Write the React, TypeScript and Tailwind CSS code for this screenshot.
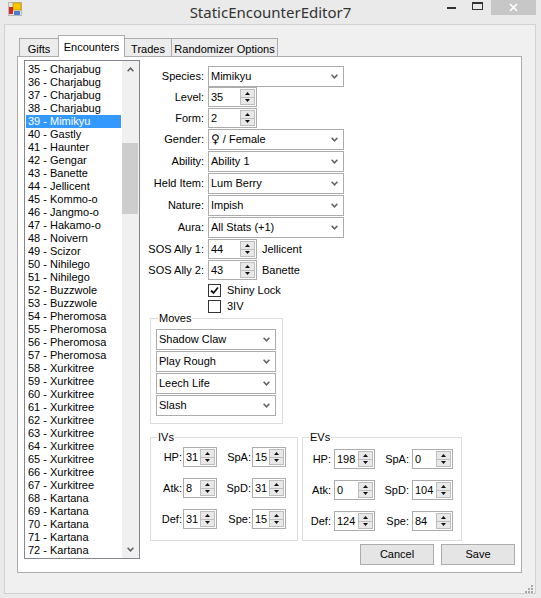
import React from 'react';

/** Encounter list entries shown in the listbox (scrolled to 35). */
const ENTRIES: string[] = [
    ...['Charjabug', 'Charjabug', 'Charjabug', 'Charjabug', 'Mimikyu', 'Gastly', 'Haunter', 'Gengar', 'Banette', 'Jellicent'],
    ...['Kommo-o', 'Jangmo-o', 'Hakamo-o', 'Noivern', 'Scizor', 'Nihilego', 'Nihilego', 'Buzzwole', 'Buzzwole'],
    ...['Pheromosa', 'Pheromosa', 'Pheromosa', 'Pheromosa'],
    ...Array(10).fill('Xurkitree'),
    ...Array(5).fill('Kartana'),
].map((name, i) => `${35 + i} - ${name}`);

const SELECTED = 4;

function ChevronDown() {
    return (
        <svg width="7" height="5" viewBox="0 0 7 5">
            <path d="M0.6 0.8 L3.5 3.8 L6.4 0.8" fill="none" stroke="#606060" strokeWidth="1.5" />
        </svg>
    );
}

function ChevronUp() {
    return (
        <svg width="7" height="5" viewBox="0 0 7 5">
            <path d="M0.6 4.2 L3.5 1.2 L6.4 4.2" fill="none" stroke="#606060" strokeWidth="1.5" />
        </svg>
    );
}

function Combo({ value, width }: { value: React.ReactNode; width: string }) {
    return (
        <div className={`flex h-[21px] items-center justify-between border border-[#acacac] bg-white pl-[2px] pr-[5px] ${width}`}>
            <span>{value}</span>
            <ChevronDown />
        </div>
    );
}

/** Up/down spin buttons of a NumericUpDown. */
function Spin() {
    return (
        <div className="mr-px flex h-full w-[15px] flex-col py-px">
            <div className="flex flex-1 items-center justify-center border border-[#bdbdbd] bg-[#e8e8e8]">
                <svg width="5" height="3" viewBox="0 0 5 3">
                    <path d="M2.5 0 L5 3 L0 3Z" fill="#111" />
                </svg>
            </div>
            <div className="flex flex-1 items-center justify-center border border-t-0 border-[#bdbdbd] bg-[#e8e8e8]">
                <svg width="5" height="3" viewBox="0 0 5 3">
                    <path d="M0 0 L5 0 L2.5 3Z" fill="#111" />
                </svg>
            </div>
        </div>
    );
}

function Numeric({ value, width }: { value: string; width: string }) {
    return (
        <div className={`flex h-[20px] items-center border border-[#acacac] bg-white ${width}`}>
            <span className="flex-1 pl-[2px]">{value}</span>
            <Spin />
        </div>
    );
}

function Row({ label, className, children }: { label: string; className?: string; children: React.ReactNode }) {
    return (
        <div className={`flex items-center ${className ?? ''}`}>
            <span className="w-[65px] pr-px text-right">{label}</span>
            <div className="ml-[3px] flex items-center">{children}</div>
        </div>
    );
}

function CheckBox({ label, checked }: { label: string; checked?: boolean }) {
    return (
        <div className="ml-[68px] flex h-[13px] items-center">
            <div className="flex h-[13px] w-[13px] items-center justify-center border border-[#333] bg-white">
                {checked && (
                    <svg width="9" height="9" viewBox="0 0 9 9">
                        <path d="M1 4.5 L3.5 7 L8 1.5" fill="none" stroke="#111" strokeWidth="1.8" />
                    </svg>
                )}
            </div>
            <span className="ml-[6px]">{label}</span>
        </div>
    );
}

function StatRow({ l1, v1, l2, v2, ev }: { l1: string; v1: string; l2: string; v2: string; ev?: boolean }) {
    return (
        <div className="flex items-center">
            <span className={`text-right ${ev ? 'w-[31px] pr-[3px]' : 'w-[32px] pr-px'}`}>{l1}</span>
            <Numeric value={v1} width={ev ? 'w-[41px]' : 'w-[34px]'} />
            <span className={`text-right ${ev ? 'w-[37px] pr-[3px]' : 'w-[35px] pr-px'}`}>{l2}</span>
            <Numeric value={v2} width={ev ? 'w-[41px]' : 'w-[34px]'} />
        </div>
    );
}

function App() {
    return (
        <div className="h-[598px] w-[541px] overflow-hidden bg-[#eaeaea] font-['Liberation_Sans',Arial,sans-serif] text-[11px] leading-[13px] text-black">
            {/* Title bar */}
            <div className="grid h-[24px] grid-cols-[1fr_auto_1fr]">
                <div className="pl-[8px] pt-[2px]">
                    <svg width="14" height="14" viewBox="0 0 14 14">
                        <rect x="0.5" y="0.5" width="13" height="13" fill="#e4e4e4" stroke="#b8b8b8" />
                        <rect x="5" y="1" width="8" height="7" fill="#f7c600" stroke="#c99a00" strokeWidth="0.8" />
                        <rect x="1" y="5" width="4" height="7" fill="#d22a2a" />
                        <rect x="6" y="9" width="6" height="4" fill="#4a7fd6" />
                    </svg>
                </div>
                <div className="flex items-center font-['Noto_Sans','Open_Sans',sans-serif] text-[15px] text-[#333]">
                    StaticEncounterEditor7
                </div>
                <div className="flex items-start justify-end pr-[5px]">
                    <div className="flex h-[15px] w-[26px] justify-center pt-[7px]">
                        <div className="h-[2px] w-[9px] bg-[#333]" />
                    </div>
                    <div className="flex h-[15px] w-[27px] justify-center pt-[2px]">
                        <div className="h-[8px] w-[11px] border border-t-2 border-[#333]" />
                    </div>
                    <div className="flex h-[15px] w-[45px] items-center justify-center bg-[#c7c7c7]">
                        <svg width="9" height="9" viewBox="0 0 9 9">
                            <path d="M1 1 L8 8 M8 1 L1 8" stroke="#fff" strokeWidth="1.6" />
                        </svg>
                    </div>
                </div>
            </div>

            {/* Client area */}
            <div className="ml-[4px] flex h-[570px] w-[532px] flex-col border border-[#d2d2d2] bg-[#f0f0f0] pl-[12px] pt-[10px]">
                {/* Tabs */}
                <div className="ml-[2px] flex h-[21px] items-end">
                    <div className="flex h-[18px] w-[39px] justify-center border-l border-t border-[#acacac] bg-[#ececec] pt-[4px]">Gifts</div>
                    <div className="relative z-10 -mb-px flex h-[22px] w-[67px] justify-center border-x border-t border-[#acacac] bg-white pt-[5px]">
                        Encounters
                    </div>
                    <div className="flex h-[18px] w-[47px] justify-center border-r border-t border-[#acacac] bg-[#ececec] pt-[4px]">Trades</div>
                    <div className="flex h-[18px] w-[106px] justify-center border-r border-t border-[#acacac] bg-[#ececec] pt-[4px]">
                        Randomizer Options
                    </div>
                </div>

                {/* Tab page */}
                <div className="flex h-[517px] w-[505px] border border-[#acacac] bg-white">
                    {/* Encounter list */}
                    <div className="ml-[6px] mt-[3px] flex h-[499px] w-[116px] border border-[#828790] bg-white">
                        <div className="flex-1 overflow-hidden pt-[2px]">
                            {ENTRIES.map((e, i) => (
                                <div
                                    key={e}
                                    className={`mx-px h-[13px] whitespace-nowrap px-[2px] ${i === SELECTED ? 'bg-[#3399ff] text-white' : ''}`}
                                >
                                    {e}
                                </div>
                            ))}
                        </div>
                        <div className="flex w-[17px] flex-col bg-[#f0f0f0]">
                            <div className="flex h-[17px] items-center justify-center">
                                <ChevronUp />
                            </div>
                            <div className="flex-1">
                                <div className="ml-0 mr-px mt-[65px] h-[71px] bg-[#cdcdcd]" />
                            </div>
                            <div className="flex h-[17px] items-center justify-center">
                                <ChevronDown />
                            </div>
                        </div>
                    </div>

                    {/* Encounter details */}
                    <div className="mt-[9px] flex flex-1 flex-col">
                        <Row label="Species:" className="h-[21px]">
                            <Combo value="Mimikyu" width="w-[136px]" />
                        </Row>
                        <Row label="Level:" className="h-[20px]">
                            <Numeric value="35" width="w-[49px]" />
                        </Row>
                        <Row label="Form:" className="mt-px h-[20px]">
                            <Numeric value="2" width="w-[49px]" />
                        </Row>
                        <Row label="Gender:" className="mt-px h-[21px]">
                            <Combo
                                value={
                                    <>
                                        <span className="font-['DejaVu_Sans',sans-serif] text-[12px]">♀</span> / Female
                                    </>
                                }
                                width="w-[136px]"
                            />
                        </Row>
                        <Row label="Ability:" className="mt-px h-[21px]">
                            <Combo value="Ability 1" width="w-[136px]" />
                        </Row>
                        <Row label="Held Item:" className="mt-px h-[21px]">
                            <Combo value="Lum Berry" width="w-[136px]" />
                        </Row>
                        <Row label="Nature:" className="mt-px h-[21px]">
                            <Combo value="Impish" width="w-[136px]" />
                        </Row>
                        <Row label="Aura:" className="mt-px h-[21px]">
                            <Combo value="All Stats (+1)" width="w-[136px]" />
                        </Row>
                        <Row label="SOS Ally 1:" className="mt-px h-[20px]">
                            <Numeric value="44" width="w-[49px]" />
                            <span className="ml-[5px]">Jellicent</span>
                        </Row>
                        <Row label="SOS Ally 2:" className="mt-px h-[20px]">
                            <Numeric value="43" width="w-[49px]" />
                            <span className="ml-[5px]">Banette</span>
                        </Row>
                        <div className="mt-[4px]">
                            <CheckBox label="Shiny Lock" checked />
                        </div>
                        <div className="mt-[3px]">
                            <CheckBox label="3IV" />
                        </div>

                        {/* Moves */}
                        <fieldset className="ml-[10px] h-[111px] w-[133px] border border-[#dcdcdc] px-[5px]">
                            <legend className="ml-[2px] px-px leading-[10px]">Moves</legend>
                            <div className="flex flex-col gap-px pt-[6px]">
                                <Combo value="Shadow Claw" width="w-[120px]" />
                                <Combo value="Play Rough" width="w-[120px]" />
                                <Combo value="Leech Life" width="w-[120px]" />
                                <Combo value="Slash" width="w-[120px]" />
                            </div>
                        </fieldset>

                        {/* IVs / EVs */}
                        <div className="ml-[10px] mt-[8px] flex gap-[4px]">
                            <fieldset className="h-[109px] w-[148px] border border-[#dcdcdc]">
                                <legend className="ml-[6px] px-px leading-[10px]">IVs</legend>
                                <div className="flex flex-col gap-[11px] pt-[5px]">
                                    <StatRow l1="HP:" v1="31" l2="SpA:" v2="15" />
                                    <StatRow l1="Atk:" v1="8" l2="SpD:" v2="31" />
                                    <StatRow l1="Def:" v1="31" l2="Spe:" v2="15" />
                                </div>
                            </fieldset>
                            <fieldset className="h-[109px] w-[160px] border border-[#dcdcdc]">
                                <legend className="ml-[6px] px-px leading-[10px]">EVs</legend>
                                <div className="flex flex-col gap-[11px] pt-[7px]">
                                    <StatRow ev l1="HP:" v1="198" l2="SpA:" v2="0" />
                                    <StatRow ev l1="Atk:" v1="0" l2="SpD:" v2="104" />
                                    <StatRow ev l1="Def:" v1="124" l2="Spe:" v2="84" />
                                </div>
                            </fieldset>
                        </div>

                        {/* Actions */}
                        <div className="mt-[3px] flex justify-end gap-[7px] pr-[6px]">
                            <button className="h-[21px] w-[74px] border border-[#acacac] bg-[#e5e5e5]">Cancel</button>
                            <button className="h-[21px] w-[74px] border border-[#acacac] bg-[#e5e5e5]">Save</button>
                        </div>
                    </div>
                </div>

                {/* Size grip */}
                <div className="mt-[12px] flex justify-end pr-[2px]">
                    <svg width="8" height="8" viewBox="0 0 8 8" fill="#a8a8a8">
                        <rect x="6" y="0" width="2" height="2" />
                        <rect x="3" y="3" width="2" height="2" />
                        <rect x="6" y="3" width="2" height="2" />
                        <rect x="0" y="6" width="2" height="2" />
                        <rect x="3" y="6" width="2" height="2" />
                        <rect x="6" y="6" width="2" height="2" />
                    </svg>
                </div>
            </div>
        </div>
    );
}

export default App;
